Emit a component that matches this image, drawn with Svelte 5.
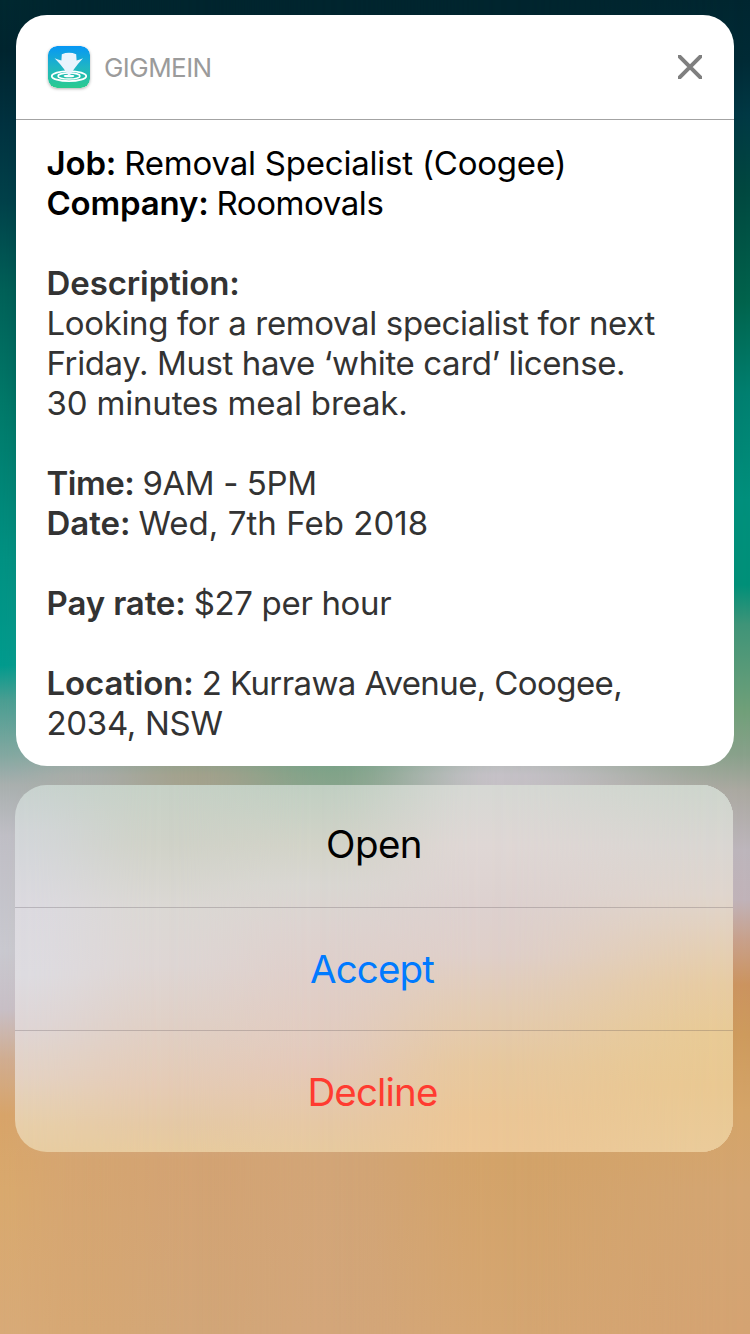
<script>
  // Colours sampled on columns, top to bottom; each column fades into the next one.
  const wallpaper = [
    { x: 0, stops: [['#002830', 0], ['#00252f', 50], ['#003240', 125], ['#00414a', 200], ['#006158', 290], ['#007969', 400], ['#009283', 560], ['#009b8d', 665], ['#4a9e92', 700], ['#83a8a1', 755], ['#a9b0af', 785], ['#c0bfc6', 835], ['#c9c9d0', 950], ['#c8bfc6', 1010], ['#d1ad90', 1060], ['#d8a469', 1115], ['#d9a96e', 1190], ['#d8aa78', 1334]] },
    { x: 80, stops: [['#00252e', 0], ['#00252e', 400], ['#4a9e90', 700], ['#a8aca8', 775], ['#c9b9b4', 1000], ['#d5a571', 1160], ['#d6a874', 1334]] },
    { x: 195, stops: [['#00252e', 0], ['#00252e', 400], ['#4a9e80', 700], ['#a2a18c', 775], ['#c9b9b4', 1000], ['#d3a373', 1160], ['#d2a678', 1334]] },
    { x: 330, stops: [['#00252e', 0], ['#00252e', 400], ['#4a9e80', 700], ['#82a389', 775], ['#c5b5b0', 950], ['#d2a577', 1160], ['#d3a67a', 1334]] },
    { x: 500, stops: [['#00252e', 0], ['#00252e', 400], ['#80a388', 700], ['#c5c1c7', 775], ['#c9b7b5', 930], ['#d3a369', 1160], ['#d5a672', 1334]] },
    { x: 750, stops: [['#002630', 0], ['#002a35', 60], ['#003844', 115], ['#004840', 190], ['#00634c', 300], ['#008070', 395], ['#00907c', 500], ['#009078', 585], ['#3f9478', 625], ['#6f9f78', 710], ['#88a08a', 755], ['#aaa8a0', 790], ['#bcb5bb', 850], ['#c0b2b8', 900], ['#c8a08a', 940], ['#cb935e', 985], ['#cd9a5c', 1035], ['#d4a468', 1110], ['#d3a572', 1190], ['#d4a372', 1334]] },
  ];

  const frosted = [
    { x: 0, stops: [['#c8d3cf', 0], ['#d2d6d8', 45], ['#dcdae0', 120], ['#dedce1', 190], ['#dfd6d6', 240], ['#e4d2c3', 290], ['#e8cfa9', 340], ['#e8cda2', 367]] },
    { x: 150, stops: [['#c6d1c6', 0], ['#d0d2c8', 60], ['#dbd8d4', 120], ['#ded6d4', 180], ['#e0d0c6', 240], ['#e5cbb5', 300], ['#e5c9a5', 340], ['#e8cb9e', 367]] },
    { x: 300, stops: [['#c0cfc2', 0], ['#d2d3c8', 60], ['#d9d7d2', 100], ['#ddd3d0', 140], ['#dfcfca', 190], ['#e2ccc0', 250], ['#e4c9b9', 280], ['#e6c8a4', 340], ['#e7ca9f', 367]] },
    { x: 470, stops: [['#d6d8d4', 0], ['#dfd7d5', 60], ['#ddd1cf', 120], ['#dfcfc9', 170], ['#e3ccb4', 220], ['#e7c89e', 280], ['#ebc696', 330], ['#edc796', 367]] },
    { x: 718, stops: [['#cdd5cc', 0], ['#d9d6d2', 60], ['#dfd5cd', 110], ['#e3d0bb', 150], ['#e7cba2', 200], ['#e8ca95', 250], ['#e9c892', 300], ['#eacb9a', 367]] },
  ];

  // Eased opacity ramp between two columns, so that no crease shows where they meet.
  const ease = [0, 0.125, 0.25, 0.375, 0.5, 0.625, 0.75, 0.875, 1];
  const ramp = (from, to) =>
    ease.map((t) => `rgba(0, 0, 0, ${t * t * (3 - 2 * t)}) ${from + (to - from) * t}px`).join(', ');

  const layer = (columns, i) => {
    const { x, stops } = columns[i];
    const fill = stops.map(([c, y]) => `${c} ${y}px`).join(', ');
    const mask = i ? `mask-image: linear-gradient(90deg, ${ramp(columns[i - 1].x, x)});` : '';
    return `background: linear-gradient(180deg, ${fill}); ${mask}`;
  };

  // ls / ts: tracking of the label and of the text, in px.
  const lines = [
    { tone: 'ink', label: 'Job:', ls: -0.15, text: 'Removal Specialist (Coogee)', ts: -0.21 },
    { tone: 'ink', label: 'Company:', ls: -0.2, text: 'Roomovals', ts: -0.42 },
    {},
    { label: 'Description:', ls: -0.1 },
    { text: 'Looking for a removal specialist for next', ts: -0.36 },
    { text: 'Friday. Must have ‘white card’ license.', ts: -0.39 },
    { text: '30 minutes meal break.', ts: -0.17 },
    {},
    { label: 'Time:', ls: -0.45, text: '9AM - 5PM', ts: -0.4 },
    { label: 'Date:', ls: -0.05, text: 'Wed, 7th Feb 2018', ts: 0.05 },
    {},
    { label: 'Pay rate:', ls: -0.12, text: '$27 per hour', ts: -0.33 },
    {},
    { label: 'Location:', ls: -0.12, text: '2 Kurrawa Avenue, Coogee,', ts: -0.6 },
    { text: '2034, NSW', ts: -0.3 },
  ];
</script>

<div class="screen">
  <div class="layers">
    {#each wallpaper as _, i}
      <div class="column" style={layer(wallpaper, i)}></div>
    {/each}
  </div>

  <main>
    <section class="card">
      <header>
        <svg class="logo" viewBox="0 0 42 42">
          <defs>
            <linearGradient id="sky" x1="0" y1="0" x2="0" y2="1">
              <stop offset="0" stop-color="#0797f5" />
              <stop offset=".5" stop-color="#1fb5c4" />
              <stop offset="1" stop-color="#2acb8e" />
            </linearGradient>
          </defs>
          <rect width="42" height="42" rx="9" fill="url(#sky)" />
          <ellipse cx="21" cy="30.2" rx="17.2" ry="5" fill="none" stroke="#fff" stroke-width="1.8" />
          <ellipse cx="21" cy="30.1" rx="11" ry="3" fill="none" stroke="#fff" stroke-width="1.5" />
          <ellipse cx="21" cy="30" rx="5.4" ry="1.3" fill="#fff" />
          <path d="M13.8 8.2Q21 5.4 28.2 8.2L28.6 14.4Q32 13.8 35 12.2Q29.6 18 26.5 22.6Q23 27.6 21.2 30.4Q18.6 27.2 15.6 22.6Q12 17.6 6.6 12.2Q10 13.8 13.4 14.4Z" fill="#e9f4fd" />
        </svg>
        <span class="app">GIGMEIN</span>
        <svg class="close" viewBox="0 0 24 24">
          <path d="M-1 -1L25 25M25 -1L-1 25" stroke="#7f7f7f" stroke-width="4" />
        </svg>
      </header>
      <div class="body">
        {#each lines as line}
          <p class={line.tone}>
            {#if line.label}<b style="letter-spacing: {line.ls}px">{line.label}</b>{/if}
            {#if line.text}<span style="letter-spacing: {line.ts}px">{line.text}</span>{/if}
          </p>
        {/each}
      </div>
    </section>

    <section class="actions">
      <div class="layers">
        {#each frosted as _, i}
          <div class="column" style={layer(frosted, i)}></div>
        {/each}
      </div>
      <button class="open">Open</button>
      <button class="accept">Accept</button>
      <button class="decline">Decline</button>
    </section>
  </main>
</div>

<style>
  :global(body) { margin: 0; }
  .screen {
    position: relative;
    width: 750px;
    height: 1334px;
    overflow: hidden;
    font-family: Inter, "Liberation Sans", sans-serif;
  }
  .layers, .column { position: absolute; inset: 0; }
  main {
    position: relative;
    display: flex;
    flex-direction: column;
    gap: 19px;
    padding: 15px 16px 0;
  }
  .card {
    box-sizing: border-box;
    height: 751px;
    border-radius: 31px;
    background: #fff;
  }
  header {
    display: flex;
    align-items: center;
    box-sizing: border-box;
    height: 105px;
    padding: 0 32px;
    border-bottom: 1px solid #a3a3a3;
  }
  .logo {
    width: 42px;
    height: 42px;
    border-radius: 9px;
    box-shadow: 0 1px 3px rgba(0, 0, 0, .3);
  }
  .app {
    flex: 1;
    margin-left: 14px;
    font-size: 26px;
    letter-spacing: -.55px;
    color: #9b9b9b;
  }
  .close { width: 24px; height: 24px; overflow: hidden; }
  .body { padding: 23px 31px 0 30.5px; }
  p {
    display: flex;
    gap: 8px;
    height: 40px;
    margin: 0;
    font-size: 33px;
    line-height: 40px;
    white-space: nowrap;
    color: #333;
  }
  p.ink { color: #000; }
  b { font-weight: 600; }
  .actions {
    position: relative;
    display: grid;
    grid-template-rows: 122px 123px 122px;
    width: 718px;
    margin-left: -1px;
    border-radius: 32px;
    overflow: hidden;
  }
  button {
    position: relative;
    padding: 0;
    border: 0;
    background: none;
    font: 38.5px/1 Inter, "Liberation Sans", sans-serif;
    letter-spacing: -.85px;
  }
  button + button { border-top: 1px solid rgba(60, 50, 60, .22); }
  .open { padding-bottom: 4px; letter-spacing: -.6px; color: #000; }
  .accept { padding: 1px 4px 0 0; color: #007aff; }
  .decline { padding: 2px 3px 0 0; color: #ff3b30; }
</style>
